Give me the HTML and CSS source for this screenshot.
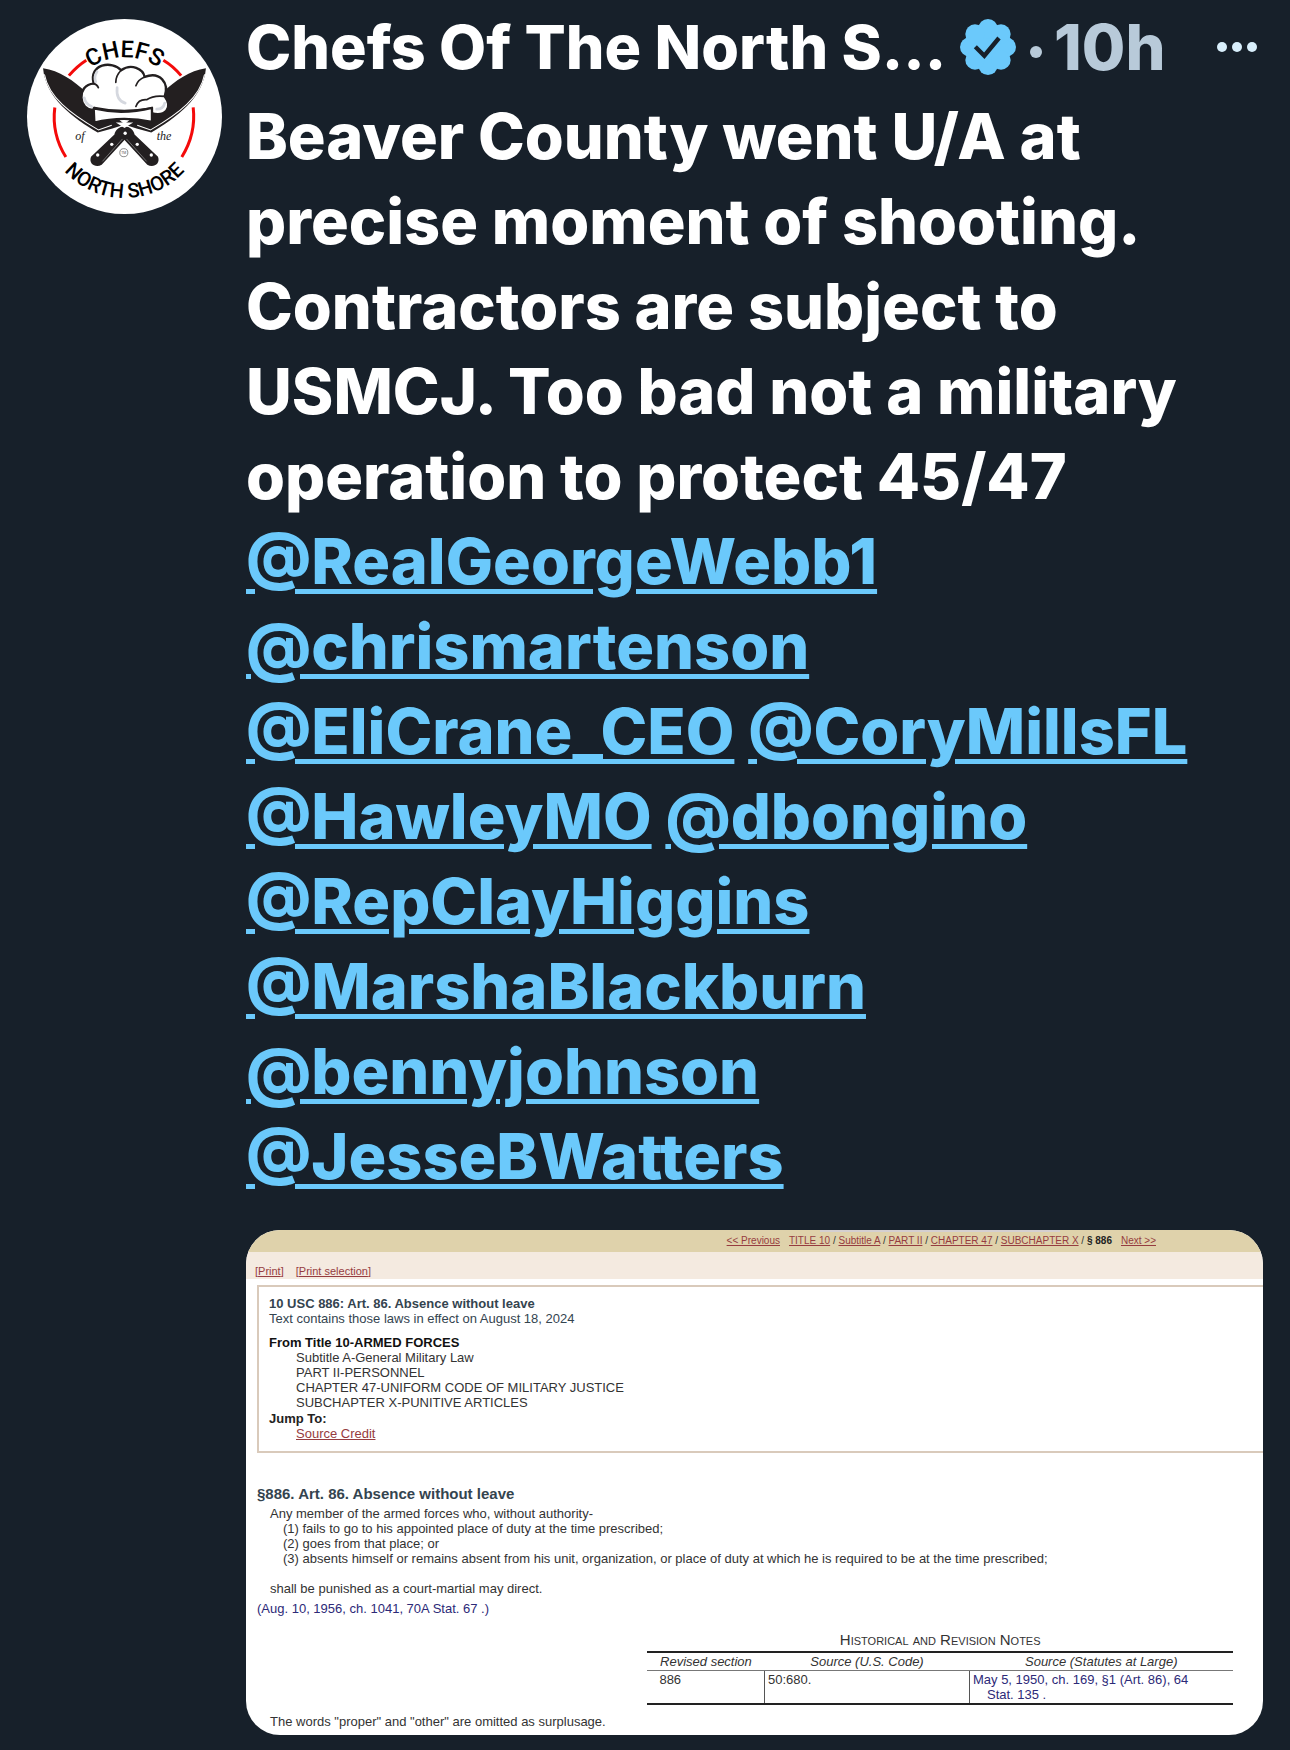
FILE: index.html
```
<!DOCTYPE html>
<html lang="en">
<head>
<meta charset="utf-8">
<meta name="viewport" content="width=device-width, initial-scale=1">
<title>Chefs Of The North Shore</title>
<link rel="stylesheet" href="styles.css">
</head>
<body>
<article class="post">
  <a class="avatar" href="#" aria-label="Chefs of the North Shore">
    <svg viewBox="53 57 582 582" aria-hidden="true">
      <defs>
        <path id="arc-top" d="M166 349 A178 178 0 0 1 522 349"/>
        <path id="arc-bottom" d="M102 349 A242 242 0 0 0 586 349"/>
        <g id="knife">
          <path d="M101 204 C150 212 190 238 232 278 L345 372 L308 384 L264 396 C190 352 108 292 101 204 Z" fill="#231f20"/>
          <path d="M105 222 C118 290 180 338 266 388 L306 374" fill="none" stroke="#fff" stroke-width="3"/>
          <path d="M332 380 C350 372 372 384 374 402 L444 468 C452 490 430 502 412 492 L342 416 Z" fill="#231f20"/>
          <path d="M350 415 L410 482" stroke="#999" stroke-width="2" fill="none"/>
          <circle cx="382" cy="431" r="5" fill="#fff"/>
          <circle cx="424" cy="463" r="5" fill="#fff"/>
        </g>
      </defs>
      <circle cx="344" cy="348" r="291" fill="#fff"/>
      <g fill="none" stroke="#f40a0a" stroke-width="9">
        <path d="M178 226 Q202 198 230 180"/>
        <path d="M460 180 Q490 198 513 226"/>
        <path d="M136 321 Q126 400 169 469"/>
        <path d="M549 321 Q558 400 515 469"/>
      </g>
      <use href="#knife"/>
      <use href="#knife" transform="translate(688 0) scale(-1 1)"/>
      <path d="M318 366 L344 382 L370 366 Z" fill="#fff"/>
      <circle cx="346" cy="398" r="5" fill="#fff"/>
      <g stroke="#231f20" stroke-width="7" stroke-linejoin="round">
        <path d="M254 328 C206 334 200 252 252 250 C236 190 308 180 334 210 C364 188 400 206 404 230 C450 212 478 248 464 288 C490 324 464 350 424 338 L424 324 C370 334 310 334 254 322 Z" fill="#fff"/>
        <path d="M252 324 C310 338 370 336 426 322 L426 364 C370 352 310 352 254 366 Z" fill="#fff"/>
      </g>
      <g fill="none" stroke="#231f20" stroke-width="5" stroke-linecap="round">
        <path d="M252 250 Q262 252 266 262"/>
        <path d="M334 210 Q318 226 318 246"/>
        <path d="M404 230 Q384 238 378 256"/>
        <path d="M464 288 Q430 284 410 298 Q386 296 378 318"/>
      </g>
      <g fill="none" stroke="#d5d8df" stroke-width="8" stroke-linecap="round">
        <path d="M224 292 Q228 312 246 318"/>
        <path d="M262 214 Q252 230 258 244"/>
        <path d="M322 262 Q318 300 346 308"/>
        <path d="M440 326 Q460 326 464 308"/>
      </g>
      <circle cx="342" cy="456" r="12" fill="none" stroke="#555" stroke-width="2"/>
      <text class="logo-tm" x="342" y="460" text-anchor="middle">TM</text>
      <text class="logo-top" text-anchor="middle"><textPath href="#arc-top" startOffset="50%">CHEFS</textPath></text>
      <text class="logo-bottom" text-anchor="middle"><textPath href="#arc-bottom" startOffset="50%">NORTH SHORE</textPath></text>
      <text class="logo-script" x="197" y="419">of</text>
      <text class="logo-script" x="440" y="419">the</text>
    </svg>
  </a>

  <div class="content">
    <header class="head">
      <a class="name" href="#">Chefs Of The North S...</a>
      <svg class="badge" viewBox="0 0 168 168" role="img" aria-label="Verified account">
        <g fill="#6bc9fb">
          <circle cx="84" cy="84" r="62"/>
          <circle cx="84" cy="29" r="29"/><circle cx="84" cy="139" r="29"/>
          <circle cx="29" cy="84" r="29"/><circle cx="139" cy="84" r="29"/>
          <circle cx="45" cy="45" r="29"/><circle cx="123" cy="45" r="29"/>
          <circle cx="45" cy="123" r="29"/><circle cx="123" cy="123" r="29"/>
        </g>
        <path d="M46 83 L73 110 L117 57" fill="none" stroke="#17202a" stroke-width="13"/>
      </svg>
      <span class="sep"></span>
      <time class="time">10h</time>
      <button class="more" type="button" aria-label="More">
        <svg viewBox="0 0 40 10" aria-hidden="true"><circle cx="5" cy="5" r="5"/><circle cx="20" cy="5" r="5"/><circle cx="35" cy="5" r="5"/></svg>
      </button>
    </header>

    <p class="text">Beaver County went U/A at<br>precise moment of shooting.<br>Contractors are subject to<br>USMCJ. Too bad not a military<br>operation to protect 45/47<br>
      <a href="#">@RealGeorgeWebb1</a><br>
      <a href="#">@chrismartenson</a><br>
      <a href="#">@EliCrane_CEO</a> <a href="#">@CoryMillsFL</a><br>
      <a href="#">@HawleyMO</a> <a href="#">@dbongino</a><br>
      <a href="#">@RepClayHiggins</a><br>
      <a href="#">@MarshaBlackburn</a><br>
      <a href="#">@bennyjohnson</a><br>
      <a href="#">@JesseBWatters</a></p>

    <section class="card">
      <nav class="crumbs">
        <a class="prev" href="#">&lt;&lt; Previous</a>
        <span><a href="#">TITLE 10</a> / <a href="#">Subtitle A</a> / <a href="#">PART II</a> / <a href="#">CHAPTER 47</a> / <a href="#">SUBCHAPTER X</a> / <b>§ 886</b></span>
        <a class="next" href="#">Next &gt;&gt;</a>
      </nav>
      <div class="print">
        <span>[<a href="#">Print</a>]</span>
        <span>[<a href="#">Print selection</a>]</span>
      </div>
      <div class="summary">
        <h2 class="slate">10 USC 886: Art. 86. Absence without leave</h2>
        <p class="slate">Text contains those laws in effect on August 18, 2024</p>
        <h3>From Title 10-ARMED FORCES</h3>
        <ul>
          <li>Subtitle A-General Military Law</li>
          <li>PART II-PERSONNEL</li>
          <li>CHAPTER 47-UNIFORM CODE OF MILITARY JUSTICE</li>
          <li>SUBCHAPTER X-PUNITIVE ARTICLES</li>
        </ul>
        <h4>Jump To:</h4>
        <ul><li><a href="#">Source Credit</a></li></ul>
      </div>
      <div class="law">
        <h2 class="law-title slate">§886. Art. 86. Absence without leave</h2>
        <p class="in">Any member of the armed forces who, without authority-</p>
        <p class="in2">(1) fails to go to his appointed place of duty at the time prescribed;</p>
        <p class="in2">(2) goes from that place; or</p>
        <p class="in2">(3) absents himself or remains absent from his unit, organization, or place of duty at which he is required to be at the time prescribed;</p>
        <p class="in shall">shall be punished as a court-martial may direct.</p>
        <p class="cite">(Aug. 10, 1956, ch. 1041, 70A Stat. 67 .)</p>
        <table class="notes">
          <caption>Historical and Revision Notes</caption>
          <colgroup><col class="c1"><col class="c2"><col></colgroup>
          <thead><tr><th>Revised section</th><th>Source (U.S. Code)</th><th>Source (Statutes at Large)</th></tr></thead>
          <tbody><tr><td>886</td><td>50:680.</td><td class="statute">May 5, 1950, ch. 169, §1 (Art. 86), 64<br>Stat. 135 .</td></tr></tbody>
        </table>
        <p class="in">The words "proper" and "other" are omitted as surplusage.</p>
      </div>
    </section>
  </div>
</article>
</body>
</html>
```
FILE: styles.css
```
* { box-sizing: border-box; }

body {
  margin: 0;
  background: #17202a;
  color: #fff;
  font-family: Inter, "Liberation Sans", sans-serif;
}

h2, h3, h4, p, ul { margin: 0; padding: 0; font-size: inherit; }
ul { list-style: none; }

.post {
  display: flex;
  gap: 24px;
  padding: 0 27px 15px;
}

.avatar {
  flex: none;
  width: 195px;
  height: 195px;
  margin-top: 19px;
}
.avatar svg { display: block; width: 100%; height: 100%; }
.logo-top { font: 500 70px Roboto, sans-serif; }
.logo-bottom { font: 500 60px Roboto, sans-serif; }
.logo-script { font: italic 36px "Liberation Serif", serif; fill: #222; }
.logo-tm { font: 10px Roboto, sans-serif; fill: #555; }

.content { flex: 1; min-width: 0; }

/* author line */
.head {
  display: flex;
  align-items: center;
  height: 94px;
}
.name, .time { font-weight: 800; line-height: 85px; white-space: nowrap; }
.name { width: 714px; font-size: 61px; color: #fff; text-decoration: none; }
.badge { flex: none; width: 56px; height: 56px; }
.sep {
  width: 12px;
  height: 12px;
  margin: 10px 12px 0 14px;
  border-radius: 50%;
  background: #b8cad9;
}
.time { font-size: 63px; color: #b8cad9; }
.more {
  margin: 0 6px 0 auto;
  padding: 0;
  border: 0;
  background: none;
  cursor: pointer;
}
.more svg { display: block; width: 40px; height: 10px; fill: #d9effc; }

/* post text */
.text {
  font-size: 63px;
  font-weight: 800;
  line-height: 85px;
  white-space: nowrap;
}
.text a {
  color: #6bc9fb;
  text-decoration: underline;
  text-decoration-thickness: 5px;
  text-underline-offset: 5px;
}

/* attached page */
.card {
  margin-top: 31px;
  overflow: hidden;
  border-radius: 34px;
  background: #fff;
  color: #333;
  font: 13px/15px "Liberation Sans", Arial, sans-serif;
  white-space: nowrap;
}
.card a { color: #963c40; }
.slate { color: #34444f; }

.crumbs {
  display: flex;
  justify-content: flex-end;
  gap: 9px;
  height: 22px;
  padding: 3px 107px 0 0;
  background: linear-gradient(#d4cfd0, #d4cfd0) 574px 0 / 240px 2px no-repeat #dfd2ab;
  font-size: 10px;
}
.crumbs b { color: #222; }

.print {
  display: flex;
  align-items: flex-end;
  gap: 12px;
  height: 27px;
  padding-left: 9px;
  background: #f4eae0;
  color: #963c40;
  font-size: 11px;
}

.summary {
  margin: 6px 0 0 11px;
  padding: 9px 0 10px 10px;
  border: 2px solid #d9cabb;
  border-right: 0;
}
.summary h3 { margin-top: 9px; color: #111; }
.summary h4 { margin-top: 1px; color: #222; }
.summary ul { padding-left: 27px; }

.law { padding: 32px 30px 6px 11px; }
.law-title { margin-bottom: 4px; font-size: 15px; line-height: 17px; }
.in { padding-left: 13px; }
.in2 { padding-left: 26px; }
.shall { margin: 15px 0 5px; }
.cite, .statute { color: #2d2a78; }

.notes {
  width: 60%;
  margin: 16px 0 9px auto;
  border-collapse: collapse;
  border-top: 2px solid #222;
  border-bottom: 2px solid #222;
}
.notes caption { padding-bottom: 4px; font-size: 15px; font-variant: small-caps; }
.notes .c1 { width: 20%; }
.notes .c2 { width: 35%; }
.notes th { padding: 1px 0; border-bottom: 1px solid #777; font-weight: 400; font-style: italic; }
.notes td { padding: 1px 3px; border-left: 1px solid #555; vertical-align: top; }
.notes td:first-child { padding-left: 12px; border-left: 0; }
.notes .statute { padding-left: 17px; text-indent: -14px; }
```
